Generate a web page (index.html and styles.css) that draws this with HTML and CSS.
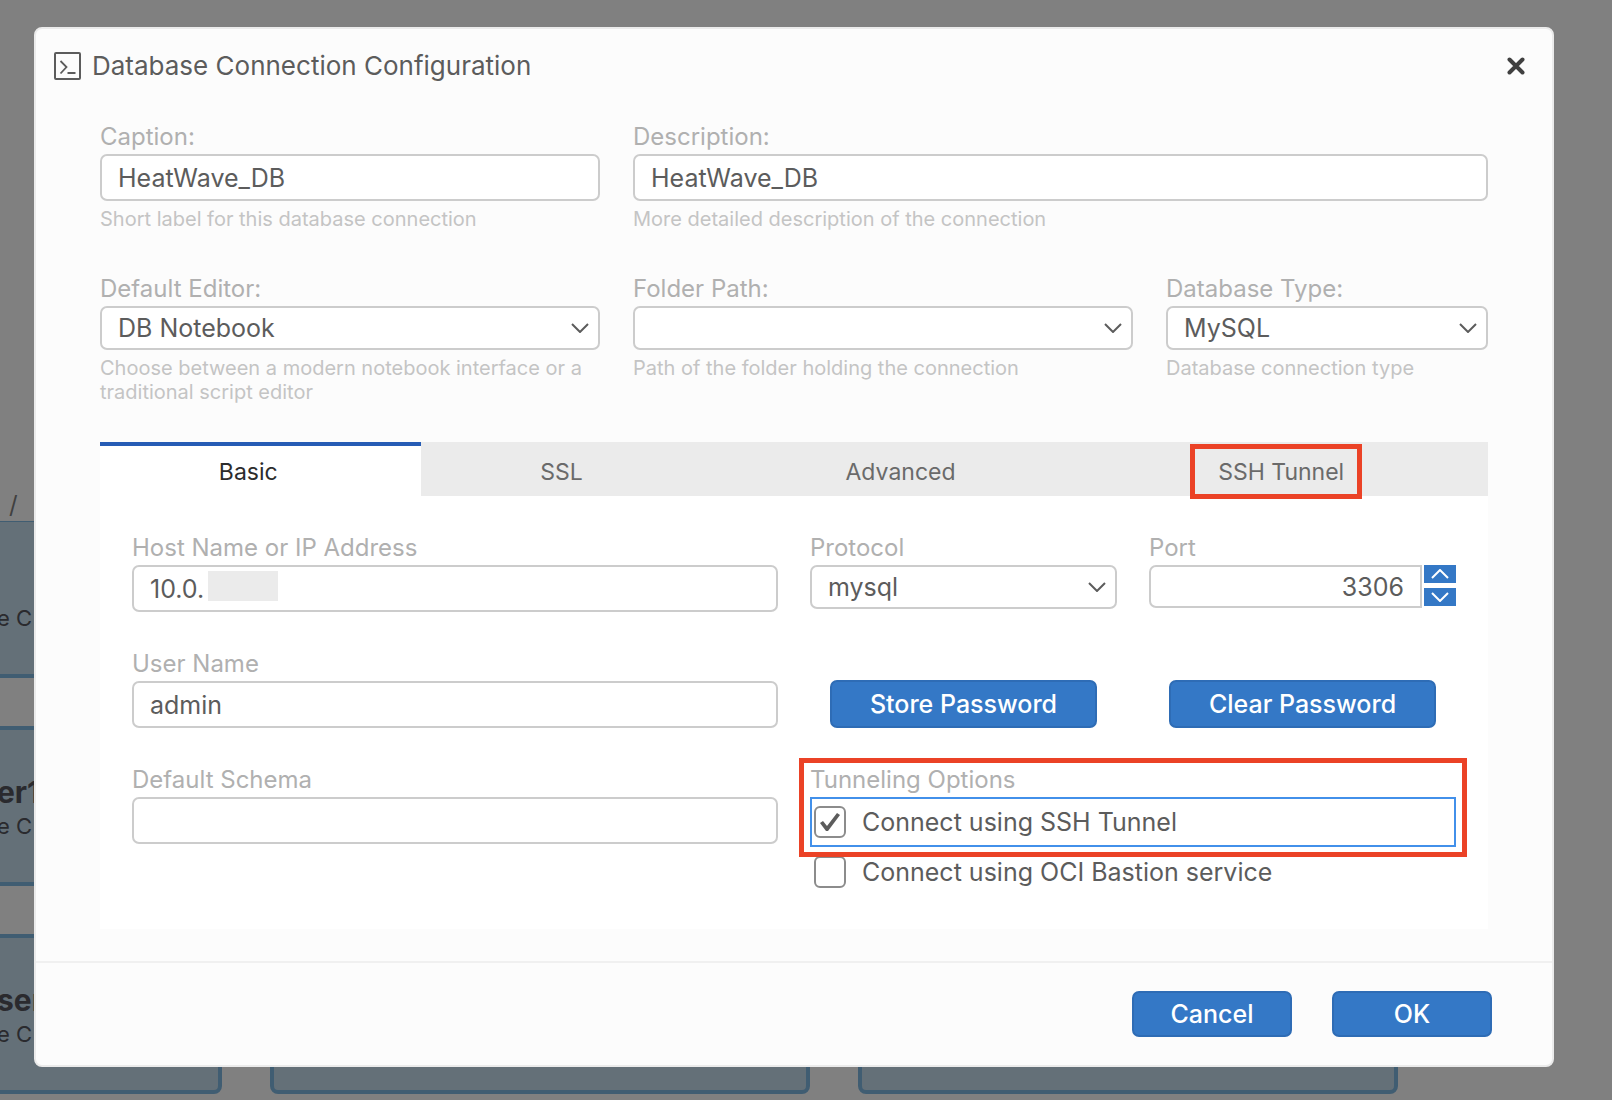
FILE: index.html
```html
<!DOCTYPE html>
<html lang="en">
<head>
<meta charset="utf-8">
<title>Database Connection Configuration</title>
<link rel="stylesheet" href="styles.css">
</head>
<body>
<main class="browser" aria-hidden="true">
  <div class="breadcrumb">/</div>
  <div class="tiles">
    <div class="tile"><strong></strong><span>e C</span></div>
    <div class="tile"></div>
    <div class="tile"></div>
    <div class="tile"><strong>er1</strong><span>e C</span></div>
    <div class="tile"></div>
    <div class="tile"></div>
    <div class="tile"><strong>ser</strong><span>e C</span></div>
    <div class="tile"></div>
    <div class="tile"></div>
  </div>
</main>

<div class="backdrop">
<form class="dialog" role="dialog" aria-labelledby="dialog-title">
  <header class="dialog-header">
    <svg class="title-icon" viewBox="0 0 28 28" fill="none" stroke="#5c5c5c" stroke-width="2">
      <rect x="1" y="1" width="25" height="26" rx="1"/>
      <path d="M6.500 9l6 6-6 6.500M13.500 21h8" stroke-width="1.800"/>
    </svg>
    <h1 id="dialog-title">Database Connection Configuration</h1>
    <button class="close" type="button" aria-label="Close">
      <svg viewBox="0 0 18 18" fill="none" stroke="#404040" stroke-width="4" stroke-linecap="round"><path d="M2.500 2.500l13 13M15.500 2.500l-13 13"/></svg>
    </button>
  </header>

  <div class="content">
    <div class="row row-names">
      <div class="field">
        <label for="caption">Caption:</label>
        <input id="caption" class="text" type="text" value="HeatWave_DB">
        <p class="help">Short label for this database connection</p>
      </div>
      <div class="field">
        <label for="description">Description:</label>
        <input id="description" class="text" type="text" value="HeatWave_DB">
        <p class="help">More detailed description of the connection</p>
      </div>
    </div>
    <div class="row row-types">
      <div class="field">
        <label for="editor">Default Editor:</label>
        <div class="select"><select id="editor"><option>DB Notebook</option></select><svg viewBox="0 0 18 10"><path d="M1 1l8 8 8-8"/></svg></div>
        <p class="help">Choose between a modern notebook interface or a traditional script editor</p>
      </div>
      <div class="field">
        <label for="folder">Folder Path:</label>
        <div class="select"><select id="folder"><option></option></select><svg viewBox="0 0 18 10"><path d="M1 1l8 8 8-8"/></svg></div>
        <p class="help">Path of the folder holding the connection</p>
      </div>
      <div class="field">
        <label for="dbtype">Database Type:</label>
        <div class="select"><select id="dbtype"><option>MySQL</option></select><svg viewBox="0 0 18 10"><path d="M1 1l8 8 8-8"/></svg></div>
        <p class="help">Database connection type</p>
      </div>
    </div>

    <div class="tabs" role="tablist">
      <button class="tab active" type="button" role="tab" aria-selected="true">Basic</button>
      <button class="tab" type="button" role="tab">SSL</button>
      <button class="tab" type="button" role="tab">Advanced</button>
      <button class="tab" type="button" role="tab"><span class="marked">SSH Tunnel</span></button>
    </div>

    <div class="panel" role="tabpanel">
      <div class="field">
        <label for="host">Host Name or IP Address</label>
        <div class="host"><input id="host" class="text" type="text" value="10.0."><span class="redacted"></span></div>
      </div>
      <div class="pair">
        <div class="field">
          <label for="protocol">Protocol</label>
          <div class="select"><select id="protocol"><option>mysql</option></select><svg viewBox="0 0 18 10"><path d="M1 1l8 8 8-8"/></svg></div>
        </div>
        <div class="field">
          <label for="port">Port</label>
          <div class="updown">
            <input id="port" class="text" type="text" inputmode="numeric" value="3306">
            <div class="steppers">
              <button type="button" aria-label="Increase"><svg viewBox="0 0 18 10"><path d="M1 9l8-8 8 8"/></svg></button>
              <button type="button" aria-label="Decrease"><svg viewBox="0 0 18 10"><path d="M1 1l8 8 8-8"/></svg></button>
            </div>
          </div>
        </div>
      </div>

      <div class="field">
        <label for="user">User Name</label>
        <input id="user" class="text" type="text" value="admin">
      </div>
      <div class="pair passwords">
        <button class="button" type="button">Store Password</button>
        <button class="button" type="button">Clear Password</button>
      </div>

      <div class="field">
        <label for="schema">Default Schema</label>
        <input id="schema" class="text" type="text">
      </div>
      <fieldset class="tunneling">
        <legend>Tunneling Options</legend>
        <label class="check focused"><span class="box"><input type="checkbox" checked><svg viewBox="0 0 22 20"><path d="M1 11l3-2 4 5L18 1l3 2L9 19H7z"/></svg></span>Connect using SSH Tunnel</label>
        <label class="check"><span class="box"><input type="checkbox"></span>Connect using OCI Bastion service</label>
      </fieldset>
    </div>
  </div>

  <footer class="dialog-footer">
    <button class="button" type="button">Cancel</button>
    <button class="button" type="submit">OK</button>
  </footer>
</form>
</div>
</body>
</html>
```

FILE: styles.css
```css
* { box-sizing: border-box; }

body {
  margin: 0;
  min-height: 100vh;
  overflow: hidden;
  background: #808080;
  color: #5c5c5c;
  font: 25px/34px Inter, "Liberation Sans", sans-serif;
}

h1, p, fieldset, legend { margin: 0; padding: 0; border: 0; }
button, input, select { font: inherit; color: inherit; margin: 0; }
svg { display: block; }

/* Connection tiles behind the dialog */
.browser {
  height: 100vh;
  overflow: hidden;
  padding-top: 488px;
}
.breadcrumb {
  height: 33px;
  padding-left: 9px;
  font-size: 24px;
  color: #404040;
}
.tiles {
  display: grid;
  grid-template-columns: repeat(3, 540px);
  grid-auto-rows: 160px;
  gap: 48px;
  margin: -3px 0 0 -318px;
}
.tile {
  display: flex;
  flex-direction: column;
  justify-content: center;
  padding: 6px 0 0 311px;
  border: 4px solid #405d72;
  border-radius: 8px;
  background: #647078;
  color: #2a2a2e;
  font-size: 22px;
  white-space: nowrap;
}
.tile strong { font-size: 30px; min-height: 34px; }
.tile:nth-child(-n+3) { border-top-width: 1px; margin-top: 3px; border-radius: 0 0 8px 8px; }

/* Dialog frame */
.backdrop {
  position: fixed;
  inset: 0;
  overflow: auto;
  padding: 27px 58px 33px 34px;
}
.dialog {
  border: 2px solid #ebebeb;
  border-radius: 8px;
  background: #fcfcfc;
}
.dialog-header {
  display: flex;
  align-items: center;
  gap: 10px;
  height: 73px;
  padding: 0 27px 0 18px;
}
.title-icon { width: 28px; height: 28px; }
h1 { flex: 1; font-size: 26px; font-weight: 400; }
.close { padding: 0; border: 0; background: none; }
.close svg { width: 18px; height: 18px; }

.content { padding: 18px 64px 32px; }

/* Form rows */
.row { display: grid; column-gap: 33px; }
.row-names { grid-template-columns: 500fr 855fr; margin-bottom: 41px; }
.row-types { grid-template-columns: 500fr 500fr 322fr; margin-bottom: 38px; }
.field { display: flex; flex-direction: column; min-width: 0; }
.field > label, legend { color: #b0b0b0; font-size: 24px; }
.help { margin-top: 6px; color: #c4c4c4; font-size: 20px; line-height: 24px; }

.text, select {
  width: 100%;
  border: 2px solid #cccccc;
  border-radius: 7px;
  background: #fff;
  padding: 0 16px;
  outline: 0;
}
.text { height: 47px; }
select { height: 44px; appearance: none; }
.select { display: grid; align-items: center; }
.select > * { grid-area: 1 / 1; }
.select svg {
  justify-self: end;
  width: 18px;
  height: 10px;
  margin-right: 11px;
  pointer-events: none;
}
.select path, .steppers path { fill: none; stroke: #5c5c5c; stroke-width: 2; }

/* Tabs */
.tabs { display: flex; background: #ebebeb; }
.tab {
  flex: 1 1 auto;
  height: 54px;
  padding: 6px 25px 0 0;
  border: 0;
  background: none;
  color: #6a6a6a;
  font-size: 23px;
}
.tab.active { padding-top: 2px; border-top: 4px solid #265cb5; background: #fff; color: #2c2c2c; }
.marked { position: relative; }
.marked::after {
  content: "";
  position: absolute;
  inset: -14px -18px -13px -28px;
  border: 5px solid #eb4226;
}

.panel {
  display: grid;
  grid-template-columns: 1fr 1fr;
  gap: 35px 32px;
  padding: 35px 32px 32px;
  background: #fff;
}
.pair { display: grid; grid-template-columns: 1fr 1fr; gap: 32px; }
.passwords { align-items: end; padding: 0 20px; gap: 72px; }

.host { position: relative; }
.redacted {
  position: absolute;
  left: 76px;
  top: 6px;
  width: 70px;
  height: 30px;
  background: #ebebeb;
}

.updown { display: flex; gap: 2px; }
.updown .text { height: 43px; border-radius: 7px 0 0 7px; text-align: right; }
.steppers { display: flex; flex-direction: column; gap: 5px; }
.steppers button {
  display: grid;
  place-items: center;
  width: 32px;
  height: 18px;
  padding: 0;
  border: 0;
  background: #3478c6;
}
.steppers svg { width: 18px; height: 10px; }
.steppers path { stroke: #fff; }

.button {
  height: 48px;
  padding: 0;
  border: 2px solid #2e6cb5;
  border-radius: 7px;
  background: #3478c6;
  color: #fff;
  font-weight: 500;
}

/* The highlight reaches up over the legend as well as the first option */
.tunneling { position: relative; min-width: 0; }
.tunneling::after {
  content: "";
  position: absolute;
  inset: -39px -11px 40px;
  border: 5px solid #eb4226;
  pointer-events: none;
}
.check {
  display: flex;
  align-items: center;
  gap: 16px;
  height: 50px;
  padding-left: 4px;
}
.check.focused { outline: 2px solid #4290ea; outline-offset: -2px; }
.box { display: grid; place-items: center; }
.box > * { grid-area: 1 / 1; }
.box input {
  appearance: none;
  width: 32px;
  height: 32px;
  border: 2px solid #8c8c8c;
  border-radius: 6px;
  background: #fff;
}
.box svg { width: 22px; height: 20px; fill: #5c5c5c; pointer-events: none; }

.dialog-footer {
  display: flex;
  justify-content: flex-end;
  gap: 40px;
  padding: 28px 60px;
  border-top: 2px solid #f0f0f0;
}
.dialog-footer .button { width: 160px; height: 46px; }
```
